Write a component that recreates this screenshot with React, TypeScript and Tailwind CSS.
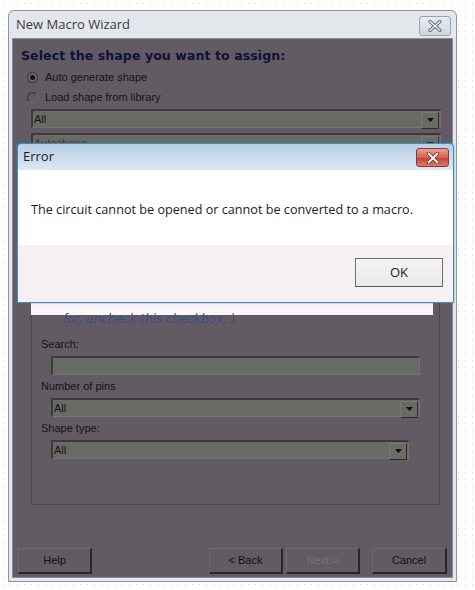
import React from "react";

function Arrow() {
    return (
        <div className="w-[18px] h-[17px] mt-[1px] mr-[1px] flex items-center justify-center border border-t-[#7a7a74] border-l-[#7a7a74] border-b-[#2e2e2e] border-r-[#2e2e2e] bg-[#6b6b66]">
            <svg width="7" height="4" viewBox="0 0 7 4"><path d="M0 0h7L3.5 4z" fill="#111" /></svg>
        </div>
    );
}

function Select({ value, w, red }: { value: string; w: string; red?: boolean }) {
    return (
        <div className={`${w} h-[19px] flex justify-between bg-[#696a63] border-t-2 border-l-2 border-t-[#3c3a3c] border-l-[#3c3a3c] border-b border-r border-b-[#77727a] border-r-[#77727a]`}>
            <span className={`pl-[1px] leading-[17px] text-[11px] ${red ? "text-[#7a1b1b]" : "text-[#141414]"}`}>{value}</span>
            <Arrow />
        </div>
    );
}

function WinButton({ label, w, disabled }: { label: string; w: string; disabled?: boolean }) {
    return (
        <div className={`${w} h-[26px] flex items-center justify-center text-[11px] border-t border-l border-t-[#6e6870] border-l-[#6e6870] border-b-2 border-r-2 border-b-[#2a272b] border-r-[#2a272b] ${disabled ? "text-[#77727a]" : "text-[#111]"}`}>
            {label}
        </div>
    );
}

export default function App() {
    return (
        <div
            className="relative w-[475px] h-[590px] overflow-hidden bg-white bg-[radial-gradient(circle,#d4d4d4_0.8px,transparent_1px)] bg-[size:7px_7px] pt-[10px] pl-[8px] font-['Liberation_Sans',sans-serif]"
        >
            {/* wizard window (dimmed behind the error box) */}
            <div className="w-[449px] h-[572px] rounded-t-[6px] border border-[#8e949b] bg-[#e3e7ec] flex flex-col px-[3px] pb-[3px]">
                <div className="h-[27px] flex items-center justify-between pl-[4px] pr-[2px]">
                    <span className="font-['Open_Sans',sans-serif] text-[13px] text-[#3a3a3a]">New Macro Wizard</span>
                    <div className="w-[32px] h-[20px] mt-[2px] rounded-[3px] border border-[#9aa5b3] bg-[linear-gradient(#e7ecf2,#cfd7e1)] flex items-center justify-center">
                        <svg width="14" height="12" viewBox="0 0 14 12">
                            <path d="M2 1.5l10 9M12 1.5l-10 9" stroke="#5f6671" strokeWidth="3.2" strokeLinecap="round" />
                            <path d="M2 1.5l10 9M12 1.5l-10 9" stroke="#f4f6f8" strokeWidth="1.4" strokeLinecap="round" />
                        </svg>
                    </div>
                </div>
                <div className="flex-1 bg-[#625b63] border border-[#8a8f96] flex flex-col pl-[8px] pr-[12px] pt-[8px] pb-[3px]">
                    <div className="font-['DejaVu_Sans',sans-serif] font-bold text-[12.5px] text-[#0e1239] tracking-[0.1px]">Select the shape you want to assign:</div>
                    <div className="flex flex-col gap-[7px] mt-[5px] pl-[6px] text-[11px] text-[#141414]">
                        <div className="flex items-center gap-[7px] h-[13px]">
                            <div className="w-[11px] h-[11px] rounded-full bg-[#6b6b66] border border-[#2f2d30] flex items-center justify-center">
                                <div className="w-[5px] h-[5px] rounded-full bg-[#111]" />
                            </div>
                            <span>Auto generate shape</span>
                        </div>
                        <div className="flex items-center gap-[7px] h-[13px]">
                            <div className="w-[11px] h-[11px] rounded-full border border-[#2f2d30] border-r-[#6b6770] border-b-[#6b6770]" />
                            <span>Load shape from library</span>
                        </div>
                    </div>
                    <div className="mt-[5px] ml-[10px] flex flex-col gap-[5px]">
                        <Select value="All" w="w-[410px]" />
                        <Select value="Autoshape" w="w-[410px]" red />
                    </div>

                    {/* group box */}
                    <div className="ml-[10px] w-[409px] h-[356px] -mt-[3px] border border-[#4c464d] border-t-0 flex flex-col">
                        <div className="h-[152px]" />
                        <div className="h-[14px] bg-[#fbf4f9] -ml-[1px] w-[402px]" />
                        <div className="pl-[31px] -mt-[3px] italic text-[12px] text-[#3b4f7f] font-['DejaVu_Sans',sans-serif] leading-[14px]">for, uncheck this checkbox. )</div>
                        <div className="pl-[9px] mt-[12px] text-[11px] leading-[13px] text-[#141414]">Search:</div>
                        <div className="ml-[19px] mt-[5px] w-[369px] h-[19px] bg-[#666b63] border-t-2 border-l-2 border-t-[#3c3a3c] border-l-[#3c3a3c] border-b border-r border-b-[#77727a] border-r-[#77727a]" />
                        <div className="pl-[9px] mt-[5px] text-[11px] leading-[13px] text-[#141414]">Number of pins</div>
                        <div className="ml-[19px] mt-[5px]">
                            <Select value="All" w="w-[369px]" />
                        </div>
                        <div className="pl-[9px] mt-[5px] text-[11px] leading-[13px] text-[#141414]">Shape type:</div>
                        <div className="ml-[19px] mt-[5px]">
                            <Select value="All" w="w-[358px]" />
                        </div>
                    </div>

                    <div className="mt-auto -ml-[3px] -mr-[7px] flex items-end">
                        <WinButton label="Help" w="w-[74px]" />
                        <div className="flex-1" />
                        <WinButton label="< Back" w="w-[74px]" />
                        <div className="w-[3px]" />
                        <WinButton label="Next >" w="w-[74px]" disabled />
                        <div className="w-[12px]" />
                        <WinButton label="Cancel" w="w-[75px]" />
                    </div>
                </div>
            </div>

            {/* error message box */}
            <div className="absolute left-[17px] top-[143px] w-[437px] h-[160px] rounded-t-[4px] border border-[#3e8fae] bg-[linear-gradient(#b7cfe9,#dbe7f3_26px,#ffffff_26px)] shadow-[0_0_2px_rgba(60,140,170,0.8)] flex flex-col font-['Open_Sans',sans-serif]">
                <div className="h-[26px] flex items-center justify-between pl-[5px] pr-[4px]">
                    <span className="text-[13px] text-[#1b1b1b]">Error</span>
                    <div className="w-[33px] h-[19px] mt-[1px] rounded-[3px] border border-[#8a3a35] bg-[linear-gradient(#e9a394,#d5614f_50%,#c4402f_51%,#d97c64)] flex items-center justify-center">
                        <svg width="14" height="12" viewBox="0 0 14 12">
                            <path d="M2.5 1.5l9 9M11.5 1.5l-9 9" stroke="#7a2a22" strokeWidth="3.4" strokeLinecap="round" />
                            <path d="M2.5 1.5l9 9M11.5 1.5l-9 9" stroke="#ffffff" strokeWidth="1.8" strokeLinecap="round" />
                        </svg>
                    </div>
                </div>
                <div className="h-[75px] bg-white flex items-center pl-[13px] pt-[3px]">
                    <span className="text-[12.65px] text-[#1b1b1b]">The circuit cannot be opened or cannot be converted to a macro.</span>
                </div>
                <div className="flex-1 bg-[#f6eff4] flex items-start justify-end pr-[10px] pt-[13px]">
                    <div className="w-[88px] h-[29px] border border-[#707070] border-b-[#555] bg-[linear-gradient(#f4f4f4,#e9e9e9)] flex items-center justify-center text-[13px] text-[#1b1b1b]">OK</div>
                </div>
            </div>
        </div>
    );
}
